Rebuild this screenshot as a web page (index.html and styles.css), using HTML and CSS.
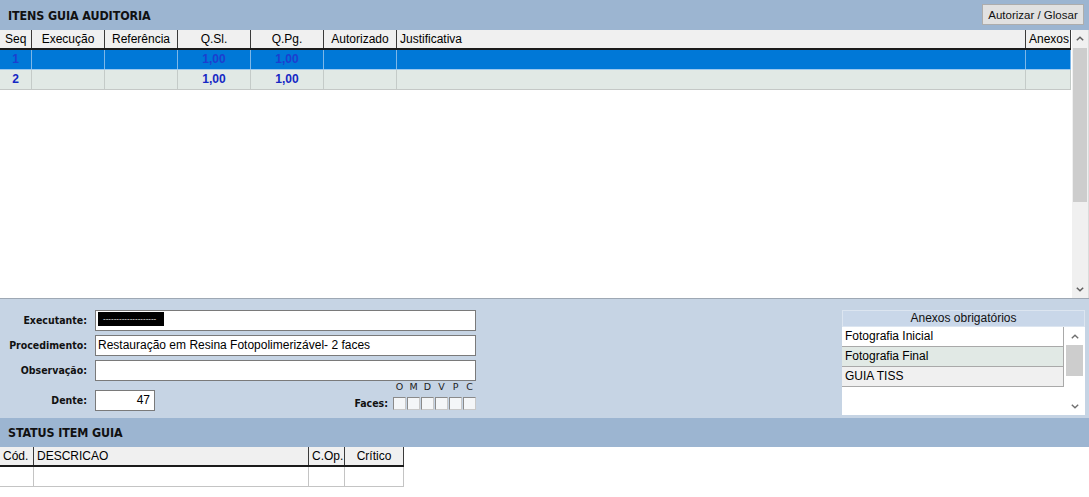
FILE: index.html
```html
<!DOCTYPE html>
<html lang="pt-BR">
<head>
<meta charset="utf-8">
<title>Itens Guia Auditoria</title>
<link rel="stylesheet" href="styles.css">
</head>
<body>
<div class="page">
  <header class="band">
    <h1 class="band-title">ITENS GUIA AUDITORIA</h1>
    <button class="btn" type="button">Autorizar / Glosar</button>
  </header>

  <section class="grid">
    <div class="table">
      <div class="trow thead">
        <div class="cell left seq">Seq</div>
        <div class="cell">Execução</div>
        <div class="cell">Referência</div>
        <div class="cell">Q.Sl.</div>
        <div class="cell">Q.Pg.</div>
        <div class="cell">Autorizado</div>
        <div class="cell left">Justificativa</div>
        <div class="cell left">Anexos</div>
      </div>
      <div class="trow tbody sel">
        <div class="cell val">1</div>
        <div class="cell"></div>
        <div class="cell"></div>
        <div class="cell val">1,00</div>
        <div class="cell val">1,00</div>
        <div class="cell"></div>
        <div class="cell"></div>
        <div class="cell"></div>
      </div>
      <div class="trow tbody alt">
        <div class="cell val">2</div>
        <div class="cell"></div>
        <div class="cell"></div>
        <div class="cell val">1,00</div>
        <div class="cell val">1,00</div>
        <div class="cell"></div>
        <div class="cell"></div>
        <div class="cell"></div>
      </div>
    </div>
    <div class="vscroll main-scroll">
      <div class="sb-btn"><svg width="8" height="5" viewBox="0 0 8 5"><polyline points="0.8,4.3 4,1.2 7.2,4.3" fill="none" stroke="#606060" stroke-width="1.5"/></svg></div>
      <div class="sb-track"><div class="sb-thumb main-thumb"></div></div>
      <div class="sb-btn"><svg width="8" height="5" viewBox="0 0 8 5"><polyline points="0.8,0.7 4,3.8 7.2,0.7" fill="none" stroke="#606060" stroke-width="1.5"/></svg></div>
    </div>
  </section>

  <section class="panel">
    <div class="form">
      <div class="fields">
        <label class="lbl">Executante:</label>
        <div class="inp"><span class="masked">--------------------</span></div>
        <label class="lbl">Procedimento:</label>
        <div class="inp">Restauração em Resina Fotopolimerizável- 2 faces</div>
        <label class="lbl">Observação:</label>
        <div class="inp"></div>
      </div>
      <div class="dente-row">
        <label class="lbl dente-lbl">Dente:</label>
        <div class="inp dente">47</div>
        <div class="spacer"></div>
        <label class="lbl faces-lbl">Faces:</label>
        <div class="faces">
          <span class="face-letter">O</span>
          <span class="face-letter">M</span>
          <span class="face-letter">D</span>
          <span class="face-letter">V</span>
          <span class="face-letter">P</span>
          <span class="face-letter">C</span>
          <span class="box"></span>
          <span class="box"></span>
          <span class="box"></span>
          <span class="box"></span>
          <span class="box"></span>
          <span class="box"></span>
        </div>
      </div>
    </div>

    <div class="anexos">
      <div class="anexos-head">Anexos obrigatórios</div>
      <div class="anexos-body">
        <ul class="anexos-list">
          <li class="an-item">Fotografia Inicial</li>
          <li class="an-item an-alt">Fotografia Final</li>
          <li class="an-item an-grey">GUIA TISS</li>
        </ul>
        <div class="vscroll small-scroll">
          <div class="sb-btn small"><svg width="8" height="5" viewBox="0 0 8 5"><polyline points="0.8,4.3 4,1.2 7.2,4.3" fill="none" stroke="#707070" stroke-width="1.4"/></svg></div>
          <div class="sb-track white"><div class="sb-thumb small-thumb"></div></div>
          <div class="sb-btn small"><svg width="8" height="5" viewBox="0 0 8 5"><polyline points="0.8,0.7 4,3.8 7.2,0.7" fill="none" stroke="#707070" stroke-width="1.4"/></svg></div>
        </div>
      </div>
    </div>
  </section>

  <header class="band band-status">
    <h2 class="band-title">STATUS ITEM GUIA</h2>
  </header>

  <section class="status">
    <div class="srow shead">
      <div class="cell left">Cód.</div>
      <div class="cell left">DESCRICAO</div>
      <div class="cell left">C.Op.</div>
      <div class="cell">Crítico</div>
    </div>
    <div class="srow sbody">
      <div class="cell"></div>
      <div class="cell"></div>
      <div class="cell"></div>
      <div class="cell"></div>
    </div>
  </section>
</div>
</body>
</html>
```

FILE: styles.css
```css
html, body {
  margin: 0;
  padding: 0;
}
body {
  width: 1089px;
  height: 497px;
  overflow: hidden;
  background: #ffffff;
  font-family: "Liberation Sans", Arial, sans-serif;
  font-size: 12px;
  color: #000;
}
.page {
  display: flex;
  flex-direction: column;
  width: 1089px;
}

/* Bands */
.band {
  height: 30px;
  box-sizing: border-box;
  background: #9cb5d1;
  display: flex;
  align-items: center;
  justify-content: space-between;
  padding: 0 5px 0 8px;
}
.band-title {
  margin: 0;
  font-family: "DejaVu Sans", sans-serif;
  font-stretch: condensed;
  font-weight: bold;
  font-size: 12.4px;
  color: #111;
  letter-spacing: -0.1px;
}
.band-status {
  height: 29px;
}
.btn {
  align-self: flex-start;
  margin-top: 4px;
  width: 102px;
  height: 21px;
  padding: 0;
  background: #e1e1e1;
  border: 1px solid #adadad;
  font-family: "Liberation Sans", Arial, sans-serif;
  font-size: 11.5px;
  color: #111;
}

/* Main grid */
.grid {
  height: 268px;
  display: flex;
  background: #ffffff;
}
.table {
  width: 1071px;
}
.trow {
  display: grid;
  grid-template-columns: 32px 73px 73px 73px 73px 73px 629px 45px;
}
.cell {
  box-sizing: border-box;
  text-align: center;
  white-space: nowrap;
  overflow: hidden;
}
.cell.left {
  text-align: left;
  padding-left: 3px;
}
.cell.seq {
  padding-left: 5px;
}
.thead {
  height: 20px;
  box-sizing: border-box;
  background: #f0f0f0;
  border-bottom: 2px solid #1a1a1a;
}
.thead .cell {
  line-height: 18px;
  border-right: 1px solid #3a3a3a;
}
.tbody {
  height: 20px;
  box-sizing: border-box;
}
.tbody .cell {
  line-height: 19px;
  border-right: 1px solid #c4cbc8;
}
.tbody.sel {
  background: #0078d7;
  border-bottom: 1px solid #9cc8ee;
}
.tbody.sel .cell {
  border-right-color: #7db7e8;
}
.tbody.alt {
  background: #e1e9e5;
  border-bottom: 1px solid #c4c8c6;
}
.val {
  font-weight: bold;
  color: #1428c4;
}
.sel .val {
  color: #1d3fd0;
}

/* Scrollbars */
.vscroll {
  display: flex;
  flex-direction: column;
  background: #f0f0f0;
}
.main-scroll {
  width: 16px;
  margin-left: 1px;
  border-right: 1px solid #dadada;
}
.sb-btn {
  height: 17px;
  display: flex;
  align-items: center;
  justify-content: center;
  flex: none;
}
.sb-track {
  flex: 1;
  display: flex;
  flex-direction: column;
  padding: 0 1px;
}
.sb-thumb {
  background: #cdcdcd;
}
.main-thumb {
  height: 154px;
  margin-top: 1px;
}

/* Form panel */
.panel {
  height: 120px;
  box-sizing: border-box;
  border-top: 1px solid #9ea8b4;
  background: #c6d4e4;
  display: flex;
  justify-content: space-between;
}
.form {
  width: 476px;
  padding-top: 11px;
  display: flex;
  flex-direction: column;
}
.fields {
  display: grid;
  grid-template-columns: 87px 381px;
  grid-auto-rows: 21px;
  column-gap: 8px;
  row-gap: 4px;
}
.lbl {
  font-family: "DejaVu Sans", sans-serif;
  font-stretch: condensed;
  font-weight: bold;
  font-size: 10.5px;
  color: #111;
  text-align: right;
  line-height: 21px;
  white-space: nowrap;
}
.inp {
  box-sizing: border-box;
  height: 21px;
  background: #ffffff;
  border: 1px solid #7a7a7a;
  padding: 0 2px;
  line-height: 19px;
  font-size: 12px;
  white-space: nowrap;
  overflow: hidden;
}
.masked {
  display: inline-block;
  vertical-align: top;
  margin-top: 1px;
  width: 66px;
  height: 14px;
  background: #000;
  color: #fff;
  font-size: 8px;
  line-height: 13px;
  letter-spacing: 0;
  padding-left: 5px;
  box-sizing: border-box;
  overflow: hidden;
}
.dente-row {
  height: 30px;
  display: flex;
  align-items: flex-end;
}
.dente-lbl {
  width: 87px;
  flex: none;
  margin-right: 8px;
}
.dente {
  width: 60px;
  text-align: right;
  padding-right: 4px;
}
.spacer {
  flex: 1;
}
.faces-lbl {
  line-height: 13px;
  margin-bottom: 1px;
  margin-right: 5px;
}
.faces {
  display: grid;
  grid-template-columns: repeat(6, 13px);
  grid-template-rows: 10px 13px;
  column-gap: 1px;
  row-gap: 5px;
  margin-bottom: 1px;
}
.face-letter {
  font-family: "DejaVu Sans", sans-serif;
  font-size: 9.5px;
  line-height: 10px;
  text-align: center;
  color: #222;
}
.box {
  box-sizing: border-box;
  border: 1px solid #8a8a8a;
  border-right-color: #c8c8c8;
  border-bottom-color: #c8c8c8;
  background: #f4f6f8;
}

/* Anexos */
.anexos {
  width: 243px;
  height: 105px;
  margin-top: 11px;
  margin-right: 4px;
  background: #ffffff;
  display: flex;
  flex-direction: column;
}
.anexos-head {
  height: 17px;
  background: #c9d7e9;
  border: 1px solid #dce5f0;
  box-sizing: border-box;
  text-align: center;
  line-height: 15px;
  font-size: 12px;
  color: #111;
}
.anexos-body {
  flex: 1;
  display: flex;
  justify-content: space-between;
}
.anexos-list {
  list-style: none;
  margin: 0;
  padding: 0;
  width: 222px;
}
.an-item {
  height: 20px;
  box-sizing: border-box;
  line-height: 19px;
  padding-left: 3px;
  border-bottom: 1px solid #a9a9a9;
  border-right: 1px solid #a9a9a9;
  font-size: 12px;
}
.an-alt {
  background: #e1e9e5;
}
.an-grey {
  background: #f0f0f0;
}
.small-scroll {
  width: 17px;
  margin-right: 2px;
  background: #ffffff;
}
.sb-btn.small {
  height: 18px;
}
.sb-track.white {
  padding: 0;
}
.small-thumb {
  height: 31px;
  margin-top: 0;
  background: #cdcdcd;
}

/* Status table */
.status {
  width: 404px;
}
.srow {
  display: grid;
  grid-template-columns: 34px 275px 36px 59px;
}
.shead {
  height: 20px;
  box-sizing: border-box;
  background: #f0f0f0;
  border-bottom: 2px solid #1a1a1a;
}
.shead .cell {
  line-height: 18px;
  border-right: 1px solid #3a3a3a;
}
.sbody {
  height: 20px;
  box-sizing: border-box;
  border-bottom: 1px solid #c4c4c4;
}
.sbody .cell {
  border-right: 1px solid #c4c4c4;
}
```
